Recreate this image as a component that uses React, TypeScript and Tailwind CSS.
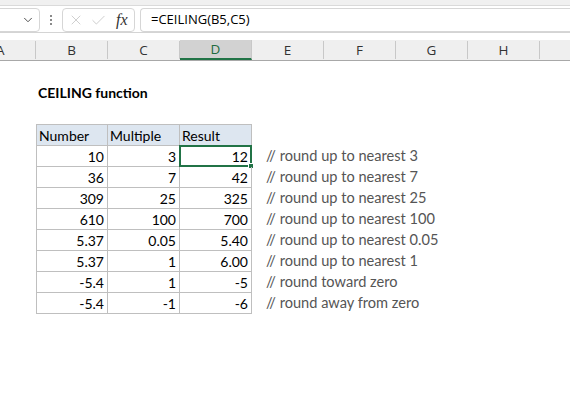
import React from 'react';
import { ChevronDown, X, Check } from 'lucide-react';

type Row = { b: string; c: string; d: string; note: string };

const rows: Row[] = [
  { b: '10', c: '3', d: '12', note: '// round up to nearest 3' },
  { b: '36', c: '7', d: '42', note: '// round up to nearest 7' },
  { b: '309', c: '25', d: '325', note: '// round up to nearest 25' },
  { b: '610', c: '100', d: '700', note: '// round up to nearest 100' },
  { b: '5.37', c: '0.05', d: '5.40', note: '// round up to nearest 0.05' },
  { b: '5.37', c: '1', d: '6.00', note: '// round up to nearest 1' },
  { b: '-5.4', c: '1', d: '-5', note: '// round toward zero' },
  { b: '-5.4', c: '-1', d: '-6', note: '// round away from zero' },
];

const cols = ['B', 'C', 'D', 'E', 'F', 'G', 'H'];

const cellFont = "font-['Lato','Open_Sans',sans-serif] text-[14px] text-black";

const App: React.FC = () => {
  return (
    <div className="w-[570px] h-[400px] bg-white overflow-hidden flex flex-col">
      {/* formula bar */}
      <div className="h-[6px] bg-[#f0f0f0] border-b border-[#dadada]" />
      <div className="h-[27px] flex items-start pt-[2px] border-b border-[#d4d4d4] bg-white">
        <div className="w-[44px] h-[24px] -ml-[4px] border border-[#d6d6d6] rounded-[4px] flex items-center justify-end pr-[4px] text-[#444]">
          <ChevronDown size={14} strokeWidth={1.6} />
        </div>
        <div className="w-[22px] h-[24px] flex flex-col items-center justify-center gap-[2px]">
          <span className="w-[2px] h-[2px] bg-[#8a8a8a]" />
          <span className="w-[2px] h-[2px] bg-[#8a8a8a]" />
          <span className="w-[2px] h-[2px] bg-[#8a8a8a]" />
        </div>
        <div className="w-[73px] h-[24px] border border-[#d6d6d6] rounded-[4px] flex items-center pl-[5px] text-[#c4c4c4]">
          <X size={16} strokeWidth={1.2} />
          <Check size={17} strokeWidth={1.2} className="ml-[6px]" />
          <span className="ml-[9px] text-[#333] font-['Liberation_Serif',serif] italic text-[16px] leading-none">
            fx
          </span>
        </div>
        <div className="ml-[5px] flex-1 h-[24px] border border-r-0 border-[#d6d6d6] rounded-l-[4px] flex items-center pl-[10px] font-['Open_Sans',sans-serif] text-[13px] text-black">
          =CEILING(B5,C5)
        </div>
      </div>
      <div className="h-[7px] bg-white" />

      {/* column headers */}
      <div className="h-[21px] flex bg-[#efefef] border-b border-[#a8a8a8] font-['Open_Sans',sans-serif] text-[13.5px] text-[#333]">
        <div className="w-[36px] shrink-0 flex items-center justify-start border-r border-[#c8c8c8] my-[1px]">
          <span className="-ml-[4px]">A</span>
        </div>
        {cols.map((c) => (
          <div
            key={c}
            className={
              c === 'D'
                ? 'w-[72px] shrink-0 flex items-center justify-center bg-[#d2d2d2] border-b-2 border-[#217346] border-r border-r-[#c8c8c8] text-[#1e6b40]'
                : 'w-[72px] shrink-0 flex items-center justify-center border-r border-[#c8c8c8] my-[1px]'
            }
          >
            {c}
          </div>
        ))}
      </div>

      {/* sheet */}
      <div className="flex flex-col">
        <div className="h-[21px]" />
        <div className={`h-[21px] flex items-center pl-[38px] font-bold ${cellFont}`}>CEILING function</div>
        <div className="h-[21px]" />

        <div className="flex">
          <div className="w-[36px] shrink-0" />
          <div className="flex flex-col border-l border-t border-[#bfbfbf]">
            <div className={`h-[21px] flex bg-[#dde6f0] ${cellFont}`}>
              <div className="w-[71px] border-r border-b border-[#bfbfbf] pl-[2px] flex items-center">Number</div>
              <div className="w-[72px] border-r border-b border-[#bfbfbf] pl-[2px] flex items-center">Multiple</div>
              <div className="w-[72px] border-r border-b border-[#bfbfbf] pl-[2px] flex items-center">Result</div>
            </div>
            {rows.map((r, i) => (
              <div key={i} className={`h-[21px] flex ${cellFont}`}>
                <div className="w-[71px] border-r border-b border-[#bfbfbf] pr-[3px] flex items-center justify-end">{r.b}</div>
                <div className="w-[72px] border-r border-b border-[#bfbfbf] pr-[3px] flex items-center justify-end">{r.c}</div>
                <div className="relative w-[72px] border-r border-b border-[#bfbfbf] pr-[3px] flex items-center justify-end">
                  {r.d}
                  {i === 0 && (
                    <div className="absolute -left-[1px] -top-[1px] w-[73px] h-[22px] border-2 border-[#217346]">
                      <span className="absolute -right-[4px] -bottom-[4px] w-[6px] h-[6px] bg-[#217346] border border-white" />
                    </div>
                  )}
                </div>
              </div>
            ))}
          </div>
          <div className="flex flex-col pt-[21px] pl-[14px]">
            {rows.map((r, i) => (
              <div key={i} className="h-[21px] flex items-center whitespace-nowrap font-['Lato','Open_Sans',sans-serif] text-[14.6px] text-[#555]">
                {r.note}
              </div>
            ))}
          </div>
        </div>
      </div>
    </div>
  );
};

export default App;
